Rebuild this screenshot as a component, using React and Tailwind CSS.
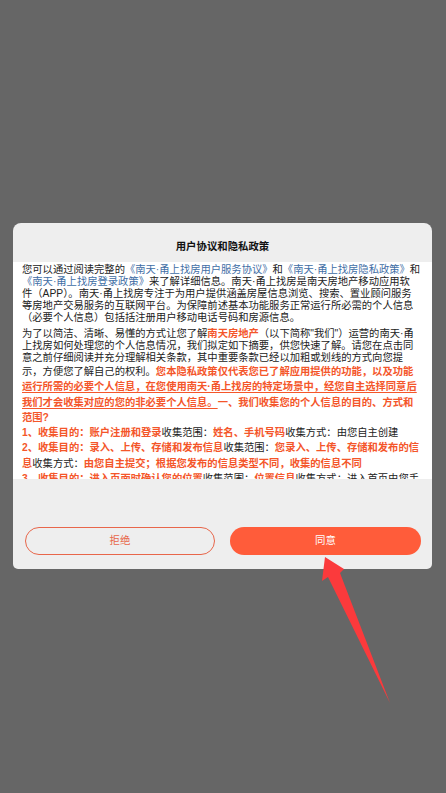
import React from "react";

const Link = ({ children }) => <span className="text-[#3f6ea5]">{children}</span>;
const Hot = ({ children }) => <span className="font-bold text-[#f4562a]">{children}</span>;
const HotLine = ({ children }) => (
  <span className="font-bold text-[#f4562a] underline underline-offset-2">{children}</span>
);

const Line = ({ children, tight }) => (
  <div className={`whitespace-nowrap ${tight ? "leading-[12px]" : "leading-[15.3px]"}`}>{children}</div>
);

export default function App() {
  return (
    <div
      className="relative h-[793px] w-[446px] overflow-hidden bg-[#666666] pl-[13px] pt-[223px] text-[10.3px] text-[#222222]"
      style={{ fontFamily: '"Liberation Sans", "Noto Sans CJK SC", sans-serif' }}
    >
      <div className="flex h-[346px] w-[419px] flex-col overflow-hidden rounded-b-[5px] rounded-t-[8px] bg-[#eeeeee]">
        <div className="flex h-[39px] shrink-0 items-end justify-center pb-[7px] text-[10.4px] font-bold text-[#111111]">
          用户协议和隐私政策
        </div>

        <div className="h-[217px] shrink-0 overflow-hidden bg-white px-[9px] pt-[2px]">
          <Line tight>
            您可以通过阅读完整的<Link>《南天·甬上找房用户服务协议》</Link>和<Link>《南天·甬上找房隐私政策》</Link>和
          </Line>
          <Line tight>
            <Link>《南天·甬上找房登录政策》</Link>来了解详细信息。南天·甬上找房是南天房地产移动应用软
          </Line>
          <Line tight>件（APP）。南天·甬上找房专注于为用户提供涵盖房屋信息浏览、搜索、置业顾问服务</Line>
          <Line tight>等房地产交易服务的互联网平台。为保障前述基本功能服务正常运行所必需的个人信息</Line>
          <Line tight>（必要个人信息）包括括注册用户移动电话号码和房源信息。</Line>

          <div className="mt-[4px]">
            <Line tight>
              为了以简洁、清晰、易懂的方式让您了解<Hot>南天房地产</Hot>（以下简称"我们"）运营的南天·甬
            </Line>
            <Line tight>上找房如何处理您的个人信息情况，我们拟定如下摘要，供您快速了解。请您在点击同</Line>
            <Line tight>意之前仔细阅读并充分理解相关条款，其中重要条款已经以加粗或划线的方式向您提</Line>
            <Line>
              示，方便您了解自己的权利。<Hot>您本隐私政策仅代表您已了解应用提供的功能，以及功能</Hot>
            </Line>
            <Line>
              <HotLine>运行所需的必要个人信息，在您使用南天·甬上找房的特定场景中，经您自主选择同意后</HotLine>
            </Line>
            <Line>
              <HotLine>我们才会收集对应的您的非必要个人信息。</HotLine>
              <Hot>一、我们收集您的个人信息的目的、方式和</Hot>
            </Line>
            <Line>
              <Hot>范围?</Hot>
            </Line>
            <Line>
              <Hot>1、收集目的：账户注册和登录</Hot>收集范围：<Hot>姓名、手机号码</Hot>收集方式：由您自主创建
            </Line>
            <Line>
              <Hot>2、收集目的：录入、上传、存储和发布信息</Hot>收集范围：<Hot>您录入、上传、存储和发布的信</Hot>
            </Line>
            <Line>
              <Hot>息</Hot>收集方式：<Hot>由您自主提交；根据您发布的信息类型不同，收集的信息不同</Hot>
            </Line>
            <Line>
              <Hot>3、收集目的：进入页面时确认您的位置</Hot>收集范围：<Hot>位置信息</Hot>收集方式：进入首页由您手
            </Line>
          </div>
        </div>

        <div className="flex flex-1 items-start gap-[15px] pl-[12px] pr-[11px] pt-[48px]">
          <button className="h-[28px] w-[190px] rounded-full border border-[#e8664a] text-[10.4px] text-[#e8664a]">
            拒绝
          </button>
          <button className="h-[28px] w-[191px] rounded-full bg-[#ff5c3a] text-[10.4px] text-white">同意</button>
        </div>
      </div>

      {/* annotation arrow over the agree button */}
      <svg className="absolute left-0 top-0" width="446" height="793" viewBox="0 0 446 793">
        <polygon points="325,557 344,569 340,573 390,703 328,577 322,581" fill="#fb3a3c" />
      </svg>
    </div>
  );
}
